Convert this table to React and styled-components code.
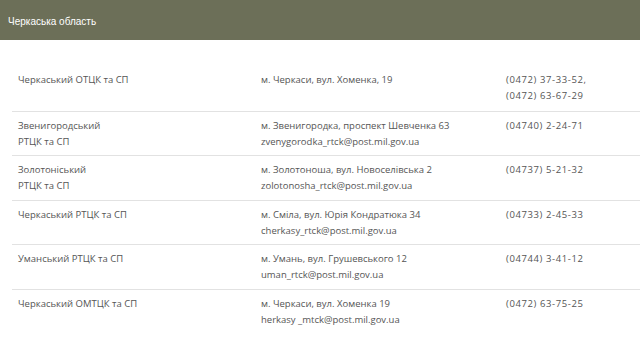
import React from 'react';
import styled, { createGlobalStyle } from 'styled-components';

const Global = createGlobalStyle`
  html, body { margin: 0; padding: 0; background: #fff; }
  body { font-family: "Open Sans", "Liberation Sans", sans-serif; }
`;

const rows = [
  { name: ['Черкаський ОТЦК та СП'], addr: ['м. Черкаси, вул. Хоменка, 19'], phone: ['(0472) 37-33-52,', '(0472) 63-67-29'] },
  { name: ['Звенигородський', 'РТЦК та СП'], addr: ['м. Звенигородка, проспект Шевченка 63', 'zvenygorodka_rtck@post.mil.gov.ua'], phone: ['(04740) 2-24-71'] },
  { name: ['Золотоніський', 'РТЦК та СП'], addr: ['м. Золотоноша, вул. Новоселівська 2', 'zolotonosha_rtck@post.mil.gov.ua'], phone: ['(04737) 5-21-32'] },
  { name: ['Черкаський РТЦК та СП'], addr: ['м. Сміла, вул. Юрія Кондратюка 34', 'cherkasy_rtck@post.mil.gov.ua'], phone: ['(04733) 2-45-33'] },
  { name: ['Уманський РТЦК та СП'], addr: ['м. Умань, вул. Грушевського 12', 'uman_rtck@post.mil.gov.ua'], phone: ['(04744) 3-41-12'] },
  { name: ['Черкаський ОМТЦК та СП'], addr: ['м. Черкаси, вул. Хоменка 19', 'herkasy _mtck@post.mil.gov.ua'], phone: ['(0472) 63-75-25'] },
];

const Header = styled.header`
  height: 40px;
  background: #6c6f58;
  display: flex;
  align-items: center;
  padding: 3px 8px 0;
  box-sizing: border-box;
`;

const Title = styled.h1`
  margin: 0;
  font-family: "Liberation Sans", Arial, sans-serif;
  font-weight: 400;
  font-size: 10px;
  color: #fff;
`;

const Table = styled.div`
  margin: 25px 0 0 12px;
`;

const Row = styled.div`
  display: grid;
  grid-template-columns: 243px 245px 1fr;
  padding: ${(p) => (p.first ? '7px 0 6px' : '6px 0 5px')};
  & + & { border-top: 1px solid #e2e2e2; }
`;

const Cell = styled.div`
  padding: 0 6px;
  font-size: 9.5px;
  line-height: 16.25px;
  color: #555;
  letter-spacing: ${(p) => (p.phone ? '0.6px' : '0')};
`;

const Line = styled.div`
  white-space: nowrap;
`;

const lines = (arr) => arr.map((t) => <Line key={t}>{t}</Line>);

const App = () => (
  <>
    <Global />
    <Header>
      <Title>Черкаська область</Title>
    </Header>
    <Table>
      {rows.map((r, i) => (
        <Row key={i} first={i === 0}>
          <Cell>{lines(r.name)}</Cell>
          <Cell>{lines(r.addr)}</Cell>
          <Cell phone>{lines(r.phone)}</Cell>
        </Row>
      ))}
    </Table>
  </>
);

export default App;
